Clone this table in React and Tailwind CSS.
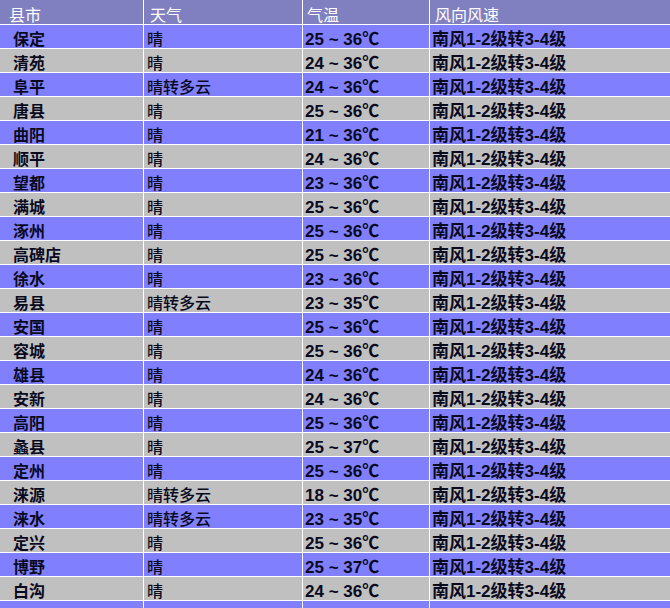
import React from 'react';

const rows = [
    ['保定', '晴', '25 ~ 36℃'],
    ['清苑', '晴', '24 ~ 36℃'],
    ['阜平', '晴转多云', '24 ~ 36℃'],
    ['唐县', '晴', '25 ~ 36℃'],
    ['曲阳', '晴', '21 ~ 36℃'],
    ['顺平', '晴', '24 ~ 36℃'],
    ['望都', '晴', '23 ~ 36℃'],
    ['满城', '晴', '25 ~ 36℃'],
    ['涿州', '晴', '25 ~ 36℃'],
    ['高碑店', '晴', '25 ~ 36℃'],
    ['徐水', '晴', '23 ~ 36℃'],
    ['易县', '晴转多云', '23 ~ 35℃'],
    ['安国', '晴', '25 ~ 36℃'],
    ['容城', '晴', '25 ~ 36℃'],
    ['雄县', '晴', '24 ~ 36℃'],
    ['安新', '晴', '24 ~ 36℃'],
    ['高阳', '晴', '25 ~ 36℃'],
    ['蠡县', '晴', '25 ~ 37℃'],
    ['定州', '晴', '25 ~ 36℃'],
    ['涞源', '晴转多云', '18 ~ 30℃'],
    ['涞水', '晴转多云', '23 ~ 35℃'],
    ['定兴', '晴', '25 ~ 36℃'],
    ['博野', '晴', '25 ~ 37℃'],
    ['白沟', '晴', '24 ~ 36℃'],
];

const wind = '南风1-2级转3-4级';
const font = { fontFamily: '"Liberation Sans", "Noto Sans CJK SC", sans-serif' };

const Cell = ({ children, className = '' }) => (
    <div className={`h-[23px] flex items-end overflow-hidden whitespace-nowrap leading-[17px] ${className}`}>
        {children}
    </div>
);

export default function App() {
    return (
        <div className="w-[670px] h-[608px] overflow-hidden bg-white" style={font}>
            <div className="grid grid-cols-[143px_158px_126px_1fr] gap-px">
                <Cell className="h-[24px] bg-[#8080c0] text-white text-[16px] pl-[9px]">县市</Cell>
                <Cell className="h-[24px] bg-[#8080c0] text-white text-[16px] pl-[6px]">天气</Cell>
                <Cell className="h-[24px] bg-[#8080c0] text-white text-[16px] pl-[4px]">气温</Cell>
                <Cell className="h-[24px] bg-[#8080c0] text-white text-[16px] pl-[5px]">风向风速</Cell>
                {rows.map(([city, weather, temp], i) => {
                    const bg = i % 2 === 0 ? 'bg-[#8080ff]' : 'bg-[#c0c0c0]';
                    return (
                        <React.Fragment key={city}>
                            <Cell className={`${bg} pl-[13px] text-[16px] font-bold text-[#0a0a1e]`}>{city}</Cell>
                            <Cell className={`${bg} pl-[3px] text-[16px] font-medium text-[#0a0a1e]`}>{weather}</Cell>
                            <Cell className={`${bg} pl-[2px] text-[17px] font-bold text-[#0a0a1e]`}>{temp}</Cell>
                            <Cell className={`${bg} pl-[2px] text-[17px] font-bold text-[#0a0a1e]`}>{wind}</Cell>
                        </React.Fragment>
                    );
                })}
                <Cell className="bg-[#8080ff]" />
                <Cell className="bg-[#8080ff]" />
                <Cell className="bg-[#8080ff]" />
                <Cell className="bg-[#8080ff]" />
            </div>
        </div>
    );
}
